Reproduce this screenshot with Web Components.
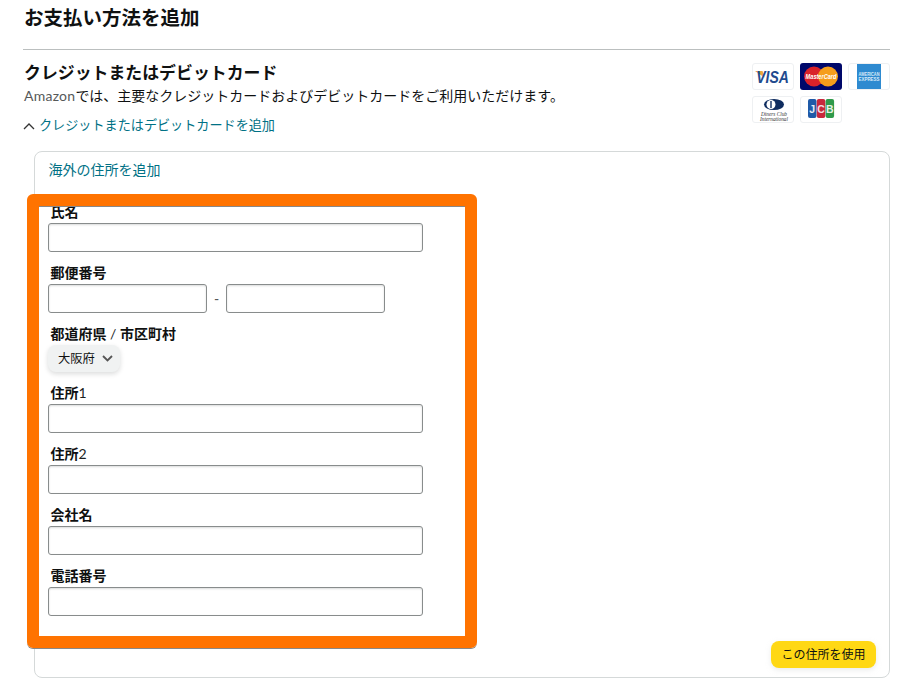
<!DOCTYPE html>
<html lang="ja"><head><meta charset="utf-8"><style>
html,body{margin:0;padding:0;background:#fff}
body{font:14px/20px "Liberation Sans","Noto Sans CJK JP",sans-serif;color:#0f1111;height:694px;overflow:hidden}
</style></head><body>
<pay-page></pay-page>
<template id="t-page"><style>
:host{display:block;height:694px;overflow:hidden;padding:0 24px 0 23px;box-sizing:border-box}
h1{margin:0;padding:6px 0 0 1px;font-size:19.5px;line-height:24px;font-weight:700;height:43px;border-bottom:1px solid #bbbfbf}
.head{display:flex;justify-content:space-between;padding-top:13px;box-sizing:border-box;height:101px}
h2{margin:0;padding-left:1px;font-size:16.9px;line-height:22px;font-weight:700;height:22px}
p{margin:0;padding-left:1px;font-size:14px;line-height:22px;height:22px}
.exp{display:flex;align-items:center;gap:4px;margin-top:8px;height:22px;font-size:13.11px;color:#007185}
svg{display:block}
.am{letter-spacing:.25px;color:#565959}
</style>
<h1>お支払い方法を追加</h1>
<div class="head"><div class="left"><h2>クレジットまたはデビットカード</h2><p><latin-text class="am">Amazon</latin-text>では、主要なクレジットカードおよびデビットカードをご利用いただけます。</p>
<div class="exp"><svg width="12" height="8" viewBox="0 0 12 8"><path d="M1 7l5-5 5 5" fill="none" stroke="#333" stroke-width="1.3"/></svg><span>クレジットまたはデビットカードを追加</span></div></div>
<card-logos></card-logos></div>
<address-card></address-card></template>

<template id="t-latin"><style>
:host{display:inline;font-family:Lato,"Liberation Sans",sans-serif;font-weight:400;color:#1c1f1f}
</style><slot></slot></template>

<template id="t-logos"><style>
:host{display:grid;grid-template-columns:repeat(3,42px);grid-auto-rows:27px;gap:6px;align-self:flex-start}
.c{width:42px;height:27px;box-sizing:border-box;border:1px solid #eef0f2;border-radius:3px;background:#fff;overflow:hidden}
svg{display:block}
.mc{background:#00086a;border:none}
text{font-family:"Liberation Sans",sans-serif}
</style>
<div class="c"><svg width="40" height="25" viewBox="0 0 40 25"><path d="M2 7h7.500l2 6.500z" fill="#efa83c"/><text transform="translate(19.500 18.500) scale(1 1.2)" text-anchor="middle" font-size="14" font-weight="700" font-style="italic" fill="#1f4b8e">VISA</text></svg></div>
<div class="c mc"><svg width="42" height="27" viewBox="0 0 42 27"><circle cx="14" cy="13.500" r="10" fill="#d9222a"/><circle cx="28" cy="13.500" r="10" fill="#f59e1c"/><text transform="translate(21 16) scale(1 1.25)" text-anchor="middle" font-size="5.600" font-weight="700" font-style="italic" fill="#fff">MasterCard</text></svg></div>
<div class="c"><svg width="40" height="25" viewBox="0 0 40 25"><rect x="8" y="0" width="24" height="25" fill="#2e8ad0"/><text x="20" y="11.500" text-anchor="middle" font-size="5" font-weight="700" fill="#d8ebf8" textLength="21" lengthAdjust="spacingAndGlyphs">AMERICAN</text><text x="20" y="17" text-anchor="middle" font-size="5" font-weight="700" fill="#d8ebf8" textLength="21" lengthAdjust="spacingAndGlyphs">EXPRESS</text></svg></div>
<div class="c"><svg width="40" height="25" viewBox="0 0 40 25"><ellipse cx="21" cy="7.500" rx="10" ry="5.500" fill="#0e2c5f"/><circle cx="18" cy="7.500" r="4.500" fill="#fff"/><rect x="17.300" y="4" width="1.400" height="7" fill="#0e2c5f"/><text x="21" y="18.500" text-anchor="middle" font-size="6" font-style="italic" style="font-family:'Liberation Serif',serif" fill="#333" textLength="26" lengthAdjust="spacingAndGlyphs">Diners Club</text><text x="21" y="23.500" text-anchor="middle" font-size="6" font-style="italic" style="font-family:'Liberation Serif',serif" fill="#333" textLength="28" lengthAdjust="spacingAndGlyphs">International</text></svg></div>
<div class="c"><svg width="40" height="25" viewBox="0 0 40 25"><rect x="7" y="2" width="8.500" height="19" rx="2" fill="#1f5aa8"/><rect x="15.800" y="2" width="8.500" height="19" rx="2" fill="#c8283c"/><rect x="24.600" y="2" width="8.500" height="19" rx="2" fill="#2f9a4a"/><text x="11.200" y="16" text-anchor="middle" font-size="10.500" font-weight="700" fill="#e8eef6">J</text><text x="20" y="16" text-anchor="middle" font-size="10.500" font-weight="700" fill="#f3dfe2">C</text><text x="28.800" y="16" text-anchor="middle" font-size="10.500" font-weight="700" fill="#e4f2e7">B</text></svg></div>
</template>

<template id="t-card"><style>
:host{display:block;position:relative;margin-left:11px;width:856px;height:527px;box-sizing:border-box;border:1px solid #d5d9d9;border-radius:8px;padding:8px 14px 0 13px}
.top{font-size:14px;line-height:20px;color:#007185;margin-left:0.5px}
form{display:flex;flex-direction:column;gap:11px;margin-top:22px;width:375px}
.bar{position:absolute;right:13px;bottom:9px}
.row{display:flex;align-items:center}
.dash{width:19px;text-align:center;font-size:14px;color:#565959}
</style>
<div class="top">海外の住所を追加</div>
<form>
<form-field>氏名<text-box slot="control" w="375"></text-box></form-field>
<form-field>郵便番号<div class="row" slot="control"><text-box w="159"></text-box><span class="dash">-</span><text-box w="159"></text-box></div></form-field>
<form-field>都道府県<latin-text>&nbsp;/&nbsp;</latin-text>市区町村<pref-select slot="control">大阪府</pref-select></form-field>
<form-field>住所<latin-text>1</latin-text><text-box slot="control" w="375"></text-box></form-field>
<form-field>住所<latin-text>2</latin-text><text-box slot="control" w="375"></text-box></form-field>
<form-field>会社名<text-box slot="control" w="375"></text-box></form-field>
<form-field>電話番号<text-box slot="control" w="375"></text-box></form-field>
</form>
<focus-ring></focus-ring>
<div class="bar"><use-button>この住所を使用</use-button></div></template>

<template id="t-field"><style>
:host{display:block}
.l{display:block;font-size:14px;line-height:20px;font-weight:700;padding-left:2.5px;height:21px;color:#0f1111}
</style><div class="l"><slot></slot></div><slot name="control"></slot></template>

<template id="t-box"><style>
:host{display:block;box-sizing:border-box;height:29px;border:1px solid #888c8c;border-radius:3px;background:#fff;box-shadow:inset 0 1px 2px rgba(15,17,17,.15)}
</style></template>

<template id="t-sel"><style>
:host{display:flex;width:72px;align-items:center;gap:7px;box-sizing:border-box;height:27px;padding:0 7px 0 10px;font-size:12.3px;font-weight:400;background:#f0f2f2;border-radius:8px;box-shadow:0 2px 5px rgba(15,17,17,.15)}
svg{display:block}
</style><slot></slot><svg width="11" height="7" viewBox="0 0 11 7"><path d="M1 1l4.500 4.500L10 1" fill="none" stroke="#555" stroke-width="1.8"/></svg></template>

<template id="t-ring"><style>
:host{display:block;position:absolute;left:-8px;top:42px;width:450px;height:454px;box-sizing:border-box;border:12px solid #ff7300;border-radius:6px;box-shadow:0 1px 0 #888,inset 0 1px 0 #888;pointer-events:none}
</style></template>

<template id="t-btn"><style>
:host{display:inline-flex;align-items:center;justify-content:center;box-sizing:border-box;width:105px;height:27px;background:#ffd814;border-radius:8px;font-size:12px;box-shadow:0 2px 5px rgba(213,217,217,.5)}
</style><slot></slot></template>

<script>
function def(name,tid,init){customElements.define(name,class extends HTMLElement{constructor(){super();this.attachShadow({mode:"open"}).appendChild(document.getElementById(tid).content.cloneNode(true));}connectedCallback(){init&&init(this);}});}
def("latin-text","t-latin");
def("card-logos","t-logos");
def("form-field","t-field");
def("text-box","t-box",e=>{e.style.width=e.getAttribute("w")+"px";});
def("pref-select","t-sel");
def("focus-ring","t-ring");
def("use-button","t-btn");
def("address-card","t-card");
def("pay-page","t-page");
</script>
</body></html>
